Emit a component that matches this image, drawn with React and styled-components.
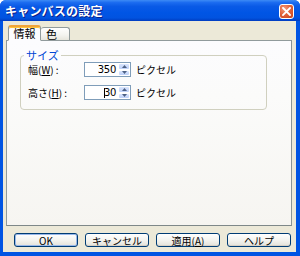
import React from 'react';
import styled, { createGlobalStyle } from 'styled-components';

const GlobalStyle = createGlobalStyle`
  html, body {
    margin: 0;
    padding: 0;
    background: #ffffff;
  }
  body {
    font-family: Tahoma, "Noto Sans CJK JP", sans-serif;
  }
`;

const JP = `"Noto Sans CJK JP", "Noto Sans", sans-serif`;

const UpArrow = () => (
  <svg width="5" height="3" viewBox="0 0 5 3"><path d="M0 3 L2.5 0 L5 3 Z" fill="#4d6185" /></svg>
);

const DownArrow = () => (
  <svg width="5" height="3" viewBox="0 0 5 3"><path d="M0 0 L2.5 3 L5 0 Z" fill="#4d6185" /></svg>
);

const App = () => {
  return (
    <>
      <GlobalStyle />
      <Window>
        <TitleBar>
          <Title>キャンバスの設定</Title>
          <CloseButton aria-label="close">
            <svg width="9" height="9" viewBox="0 0 9 9">
              <path d="M1 1 L8 8 M8 1 L1 8" stroke="#fff" strokeWidth="1.8" strokeLinecap="square" />
            </svg>
          </CloseButton>
        </TitleBar>
        <Frame>
          <Tabs>
            <Tab $active>情報</Tab>
            <Tab>色</Tab>
          </Tabs>
          <Panel>
            <GroupBox>
              <Legend>サイズ</Legend>
              <FieldRow>
                <FieldLabel>幅(<u>W</u>) :</FieldLabel>
                <SpinBox>
                  <SpinInput>350</SpinInput>
                  <SpinButtons>
                    <SpinButton><UpArrow /></SpinButton>
                    <SpinButton><DownArrow /></SpinButton>
                  </SpinButtons>
                </SpinBox>
                <Unit>ピクセル</Unit>
              </FieldRow>
              <FieldRow>
                <FieldLabel>高さ(<u>H</u>) :</FieldLabel>
                <SpinBox>
                  <SpinInput><Caret />30</SpinInput>
                  <SpinButtons>
                    <SpinButton><UpArrow /></SpinButton>
                    <SpinButton><DownArrow /></SpinButton>
                  </SpinButtons>
                </SpinBox>
                <Unit>ピクセル</Unit>
              </FieldRow>
            </GroupBox>
          </Panel>
          <ButtonRow>
            <Button $default>OK</Button>
            <Button>キャンセル</Button>
            <Button>適用(<u>A</u>)</Button>
            <Button>ヘルプ</Button>
          </ButtonRow>
        </Frame>
      </Window>
    </>
  );
};

export default App;

const Window = styled.div`
  width: 300px;
  height: 256px;
  display: flex;
  flex-direction: column;
  background: #0054e3;
  border-radius: 6px 6px 0 0;
  overflow: hidden;
`;

const TitleBar = styled.div`
  height: 21px;
  flex: none;
  display: flex;
  align-items: center;
  justify-content: space-between;
  padding: 0 6px 0 5px;
  background: linear-gradient(
    to bottom,
    #3d8bf5 0%,
    #1c6cf0 12%,
    #0a5ae6 30%,
    #0055e5 60%,
    #0153e0 85%,
    #003cc0 100%
  );
`;

const Title = styled.span`
  color: #ffffff;
  font-family: ${JP};
  font-weight: bold;
  font-size: 12px;
  letter-spacing: 0.2px;
  text-shadow: 1px 1px 0 #0a1e88;
`;

const CloseButton = styled.div`
  width: 13px;
  height: 13px;
  margin-top: 1px;
  display: flex;
  align-items: center;
  justify-content: center;
  border: 1px solid #ffffff;
  border-radius: 3px;
  background: radial-gradient(circle at 35% 30%, #f39d7e 0%, #e2633b 45%, #c8421b 100%);
`;

const Frame = styled.div`
  flex: 1;
  display: flex;
  flex-direction: column;
  background: #ece9d8;
  margin: 0 4px 4px 3px;
  padding: 3px 4px 0 3px;
`;

const Tabs = styled.div`
  display: flex;
  align-items: flex-end;
  height: 16px;
  padding-left: 2px;
  position: relative;
  z-index: 1;
`;

const Tab = styled.div`
  height: ${(p) => (p.$active ? '16px' : '13px')};
  width: ${(p) => (p.$active ? '33px' : '29px')};
  box-sizing: border-box;
  display: flex;
  align-items: center;
  justify-content: ${(p) => (p.$active ? 'center' : 'flex-start')};
  padding-left: ${(p) => (p.$active ? '0' : '5px')};
  padding-bottom: ${(p) => (p.$active ? '1px' : '0')};
  font-family: ${JP};
  font-size: 11px;
  color: #000000;
  border: 1px solid #919b9c;
  border-bottom: ${(p) => (p.$active ? '1px solid #fcfcfe' : 'none')};
  border-top: ${(p) => (p.$active ? '2px solid #f0a43a' : '1px solid #919b9c')};
  border-left: ${(p) => (p.$active ? '1px solid #919b9c' : 'none')};
  border-radius: 3px 3px 0 0;
  margin-bottom: ${(p) => (p.$active ? '-1px' : '0')};
  background: ${(p) =>
    p.$active ? '#fcfcfe' : 'linear-gradient(to bottom, #ffffff 0%, #f3f3ef 60%, #e6e5dc 100%)'};
  box-shadow: ${(p) => (p.$active ? 'inset 0 1px 0 #ffc73c' : 'none')};
`;

const Panel = styled.div`
  height: 186px;
  box-sizing: border-box;
  border: 1px solid #919b9c;
  border-right-color: #8a9495;
  border-bottom-color: #7e8889;
  background: linear-gradient(to bottom, #fcfcfe 0%, #fbfbfa 30%, #f6f5f1 100%);
  padding: 14px 24px 0 13px;
`;

const GroupBox = styled.div`
  position: relative;
  height: 55px;
  box-sizing: border-box;
  border: 1px solid #d0d0bf;
  border-radius: 4px;
  padding: 6px 0 0 7px;
  display: flex;
  flex-direction: column;
  gap: 8px;
`;

const Legend = styled.span`
  position: absolute;
  top: -8px;
  left: 3px;
  padding: 0 2px;
  background: #fcfcfe;
  color: #0046d5;
  font-family: ${JP};
  font-size: 11px;
  line-height: 14px;
`;

const FieldRow = styled.div`
  display: flex;
  align-items: center;
  height: 15px;
`;

const FieldLabel = styled.span`
  width: 56px;
  font-family: ${JP};
  font-size: 10px;
  color: #000000;
  u {
    text-underline-offset: 1px;
  }
`;

const SpinBox = styled.div`
  display: flex;
  height: 15px;
  box-sizing: border-box;
  border: 1px solid #7f9db9;
  background: #ffffff;
`;

const SpinInput = styled.div`
  width: 33px;
  display: flex;
  align-items: center;
  justify-content: flex-end;
  padding-right: 2px;
  box-sizing: border-box;
  font-family: "DejaVu Sans", sans-serif;
  font-size: 10px;
  letter-spacing: -0.3px;
  color: #000000;
`;

const Caret = styled.span`
  display: inline-block;
  width: 1px;
  height: 10px;
  background: #000000;
  margin-right: -1px;
`;

const SpinButtons = styled.div`
  width: 12px;
  display: flex;
  flex-direction: column;
`;

const SpinButton = styled.div`
  flex: 1;
  display: flex;
  align-items: center;
  justify-content: center;
  box-sizing: border-box;
  border: 1px solid #ffffff;
  border-radius: 2px;
  background: linear-gradient(to bottom, #d9e5fd 0%, #bdd0f8 100%);
`;

const Unit = styled.span`
  margin-left: 5px;
  font-family: ${JP};
  font-size: 10px;
  color: #000000;
`;

const ButtonRow = styled.div`
  display: flex;
  gap: 7px;
  padding-left: 8px;
  margin-top: 7px;
`;

const Button = styled.div`
  width: 64px;
  height: 14px;
  box-sizing: border-box;
  display: flex;
  align-items: center;
  justify-content: center;
  border: 1px solid #003c74;
  border-radius: 3px;
  background: linear-gradient(to bottom, #ffffff 0%, #f4f4f0 50%, #e3e2da 100%);
  box-shadow: ${(p) => (p.$default ? 'inset 0 0 0 1px #98b8ea' : 'inset 0 -1px 0 #d6d0c5')};
  font-family: ${JP};
  font-size: 10px;
  color: #000000;
  u {
    text-underline-offset: 1px;
  }
`;
